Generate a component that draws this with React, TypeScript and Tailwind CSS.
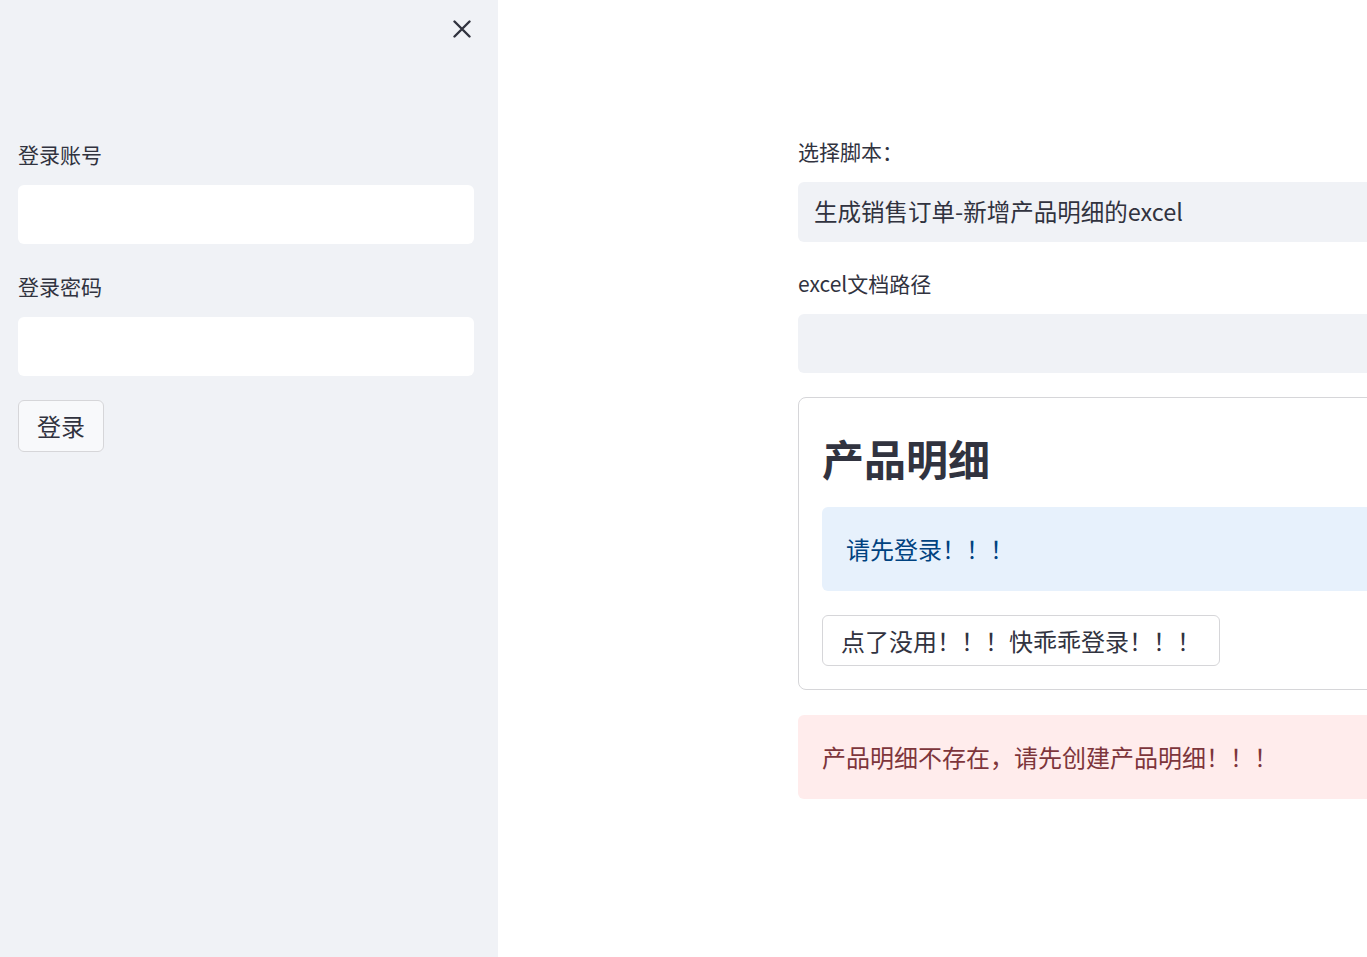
import React from "react";

const font = {
  fontFamily: '"Noto Sans CJK SC", "Noto Sans", sans-serif',
};

function CloseIcon() {
  return (
    <svg width="18" height="18" viewBox="0 0 18 18" fill="none">
      <path d="M1.5 1.5L16.5 16.5M16.5 1.5L1.5 16.5" stroke="#31333f" strokeWidth="2.4" strokeLinecap="round" />
    </svg>
  );
}

function Label({ children }: { children: React.ReactNode }) {
  return <div className="h-[30px] flex items-center text-[21px] text-[#31333f]">{children}</div>;
}

export default function App() {
  return (
    <div className="flex w-[1367px] h-[957px] overflow-hidden bg-white text-[#31333f]" style={font}>
      {/* Sidebar */}
      <aside className="w-[498px] shrink-0 h-full bg-[#f0f2f6] px-[18px] pt-[20px]">
        <div className="flex justify-end pr-[9px]">
          <button className="w-[18px] h-[18px] flex items-center justify-center">
            <CloseIcon />
          </button>
        </div>
        <div className="mt-[102px]">
          <Label>登录账号</Label>
          <div className="mt-[15px] h-[59px] w-[456px] bg-white rounded-md" />
        </div>
        <div className="mt-[28px]">
          <Label>登录密码</Label>
          <div className="mt-[15px] h-[59px] w-[456px] bg-white rounded-md" />
        </div>
        <button className="mt-[24px] h-[52px] w-[86px] rounded-md border border-[#d6d6d9] bg-[#f8f9fb] text-[24px] text-[#31333f] flex items-center justify-center">
          登录
        </button>
      </aside>

      {/* Main */}
      <main className="flex-1 overflow-hidden">
        <div className="ml-[300px] w-[900px] pt-[137px]">
          <Label>选择脚本：</Label>
          <div className="mt-[15px] h-[60px] bg-[#f0f2f6] rounded-md flex items-center px-[16px] text-[23.5px] text-[#31333f]">
            生成销售订单-新增产品明细的excel
          </div>

          <div className="mt-[27px]">
            <Label>excel文档路径</Label>
          </div>
          <div className="mt-[15px] h-[59px] bg-[#f0f2f6] rounded-md" />

          <div className="mt-[24px] border border-[#d6d6d9] rounded-lg px-[23px] pt-[28px] pb-[23px]">
            <h2 className="h-[64px] flex items-center text-[42px] font-bold text-[#31333f] leading-none">产品明细</h2>
            <div className="mt-[17px] h-[84px] rounded-md bg-[#e7f1fc] px-[24px] flex items-center text-[24px] text-[#004280]">
              请先登录！！！
            </div>
            <button className="mt-[24px] h-[51px] w-[398px] rounded-md border border-[#d6d6d9] bg-white px-[18px] flex items-center text-[24px] text-[#31333f]">
              点了没用！！！快乖乖登录！！！
            </button>
          </div>

          <div className="mt-[25px] h-[84px] rounded-md bg-[#ffecec] px-[24px] flex items-center text-[24px] text-[#7d353b]">
            产品明细不存在，请先创建产品明细！！！
          </div>
        </div>
      </main>
    </div>
  );
}
